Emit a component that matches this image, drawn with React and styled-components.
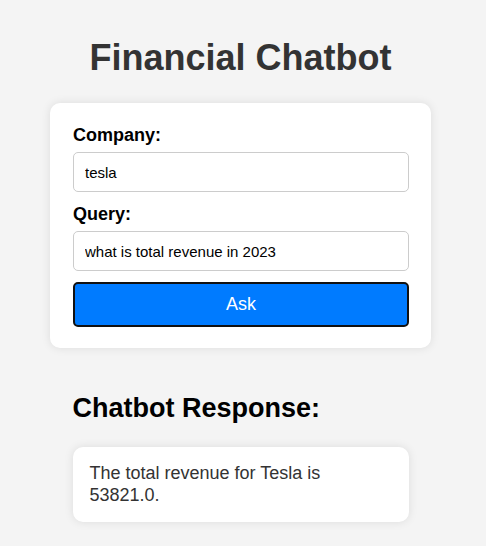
import React, { useState } from 'react';
import styled, { createGlobalStyle } from 'styled-components';

const GlobalStyle = createGlobalStyle`
  body {
    margin: 0;
    background: #f4f4f4;
    font-family: "Liberation Sans", Arial, sans-serif;
  }
`;

const S = {
  Page: styled.div`
    display: flex;
    flex-direction: column;
    align-items: center;
    padding: 37px 5px 24px 0;
  `,
  Title: styled.h1`
    margin: 0 0 24px;
    font-size: 36px;
    font-weight: bold;
    color: #333;
    text-align: center;
  `,
  Card: styled.form`
    width: 381px;
    box-sizing: border-box;
    padding: 22px 22px 21px 23px;
    background: #fff;
    border-radius: 10px;
    box-shadow: 0 0 10px rgba(0, 0, 0, 0.1);
    display: flex;
    flex-direction: column;
  `,
  Label: styled.label`
    font-size: 18px;
    font-weight: bold;
    color: #000;
    margin-bottom: 6px;
  `,
  Input: styled.input`
    height: 40px;
    box-sizing: border-box;
    padding: 0 11px;
    margin-bottom: ${props => props.$last ? '11px' : '12px'};
    border: 1px solid #ccc;
    border-radius: 5px;
    font-family: inherit;
    font-size: 15px;
    color: #000;
    outline: none;
  `,
  Button: styled.button`
    height: 45px;
    border: 2px solid #111;
    border-radius: 5px;
    background: #007bff;
    color: #fff;
    font-family: inherit;
    font-size: 18px;
    cursor: pointer;
  `,
  Response: styled.section`
    width: 336px;
    margin-top: 45px;
  `,
  Subtitle: styled.h2`
    margin: 0 0 23px;
    font-size: 27px;
    font-weight: bold;
    color: #000;
  `,
  Answer: styled.div`
    padding: 16px 17px;
    background: #fff;
    border-radius: 10px;
    box-shadow: 0 0 10px rgba(0, 0, 0, 0.1);
    font-size: 18px;
    line-height: 1.2;
    color: #333;
  `,
};

const App = () => {
  const [company, setCompany] = useState('tesla');
  const [query, setQuery] = useState('what is total revenue in 2023');

  return (
    <>
      <GlobalStyle />
      <S.Page>
        <S.Title>Financial Chatbot</S.Title>
        <S.Card onSubmit={e => e.preventDefault()}>
          <S.Label>Company:</S.Label>
          <S.Input value={company} onChange={e => setCompany(e.target.value)} />
          <S.Label>Query:</S.Label>
          <S.Input $last value={query} onChange={e => setQuery(e.target.value)} />
          <S.Button type="submit">Ask</S.Button>
        </S.Card>
        <S.Response>
          <S.Subtitle>Chatbot Response:</S.Subtitle>
          <S.Answer>The total revenue for Tesla is 53821.0.</S.Answer>
        </S.Response>
      </S.Page>
    </>
  );
};

export default App;
